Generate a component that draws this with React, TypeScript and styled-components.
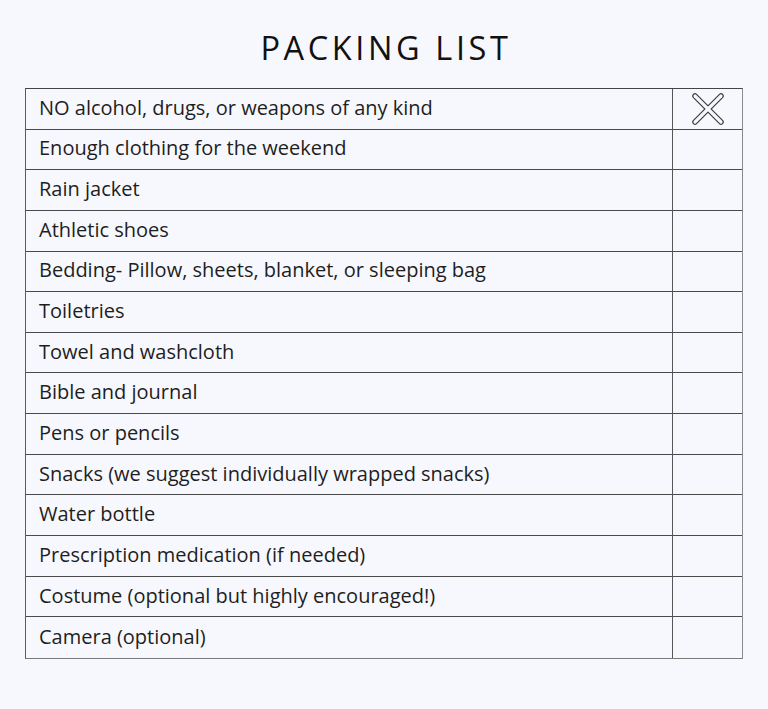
import React from "react";
import styled, { createGlobalStyle } from "styled-components";

const Global = createGlobalStyle`
  html, body { margin: 0; padding: 0; background: #f7f8fd; }
  body { font-family: "Open Sans", "DejaVu Sans", sans-serif; color: #1c1c1c; }
`;

const Page = styled.div`
  width: 768px;
  height: 709px;
  box-sizing: border-box;
  padding-top: 23px;
  display: flex;
  flex-direction: column;
  align-items: center;
`;

const Title = styled.h1`
  margin: 0 0 16px 0;
  font-size: 32.5px;
  font-weight: 400;
  letter-spacing: 3.6px;
  line-height: 49px;
  color: #111;
  padding-left: 4px;
`;

const Table = styled.div`
  width: 718px;
  border: 1px solid #5a5a5a;
  border-top-color: #444;
  border-right-color: #8a8a8a;
  border-bottom-color: #7a7a7a;
  display: grid;
  grid-template-columns: 647px 1fr;
  box-sizing: border-box;
`;

const Cell = styled.div<{ $last: boolean }>`
  height: 40.65px;
  box-sizing: border-box;
  border-bottom: ${(p) => (p.$last ? "none" : "1px solid #4a4a4a")};
  display: flex;
  align-items: center;
`;

const Label = styled(Cell)`
  padding-left: 13px;
  padding-bottom: 3px;
  font-size: 20px;
  color: #1e1e1e;
  border-right: 1px solid #555;
`;

const Check = styled(Cell)`
  justify-content: center;
`;

const items = [
  "NO alcohol, drugs, or weapons of any kind",
  "Enough clothing for the weekend",
  "Rain jacket",
  "Athletic shoes",
  "Bedding- Pillow, sheets, blanket, or sleeping bag",
  "Toiletries",
  "Towel and washcloth",
  "Bible and journal",
  "Pens or pencils",
  "Snacks (we suggest individually wrapped snacks)",
  "Water bottle",
  "Prescription medication (if needed)",
  "Costume (optional but highly encouraged!)",
  "Camera (optional)",
];

const XMark = () => (
  <svg width="32" height="32" viewBox="0 0 32 32">
    <g strokeLinecap="round">
      <line x1="3" y1="3" x2="29" y2="29" stroke="#3a3a3a" strokeWidth="5.5" />
      <line x1="29" y1="3" x2="3" y2="29" stroke="#3a3a3a" strokeWidth="5.5" />
      <line x1="3" y1="3" x2="29" y2="29" stroke="#f7f8fd" strokeWidth="3.2" />
      <line x1="29" y1="3" x2="3" y2="29" stroke="#f7f8fd" strokeWidth="3.2" />
    </g>
  </svg>
);

export default function App() {
  return (
    <>
      <Global />
      <Page>
        <Title>PACKING LIST</Title>
        <Table>
          {items.map((t, i) => (
            <React.Fragment key={t}>
              <Label $last={i === items.length - 1}>{t}</Label>
              <Check $last={i === items.length - 1}>{i === 0 ? <XMark /> : null}</Check>
            </React.Fragment>
          ))}
        </Table>
      </Page>
    </>
  );
}
